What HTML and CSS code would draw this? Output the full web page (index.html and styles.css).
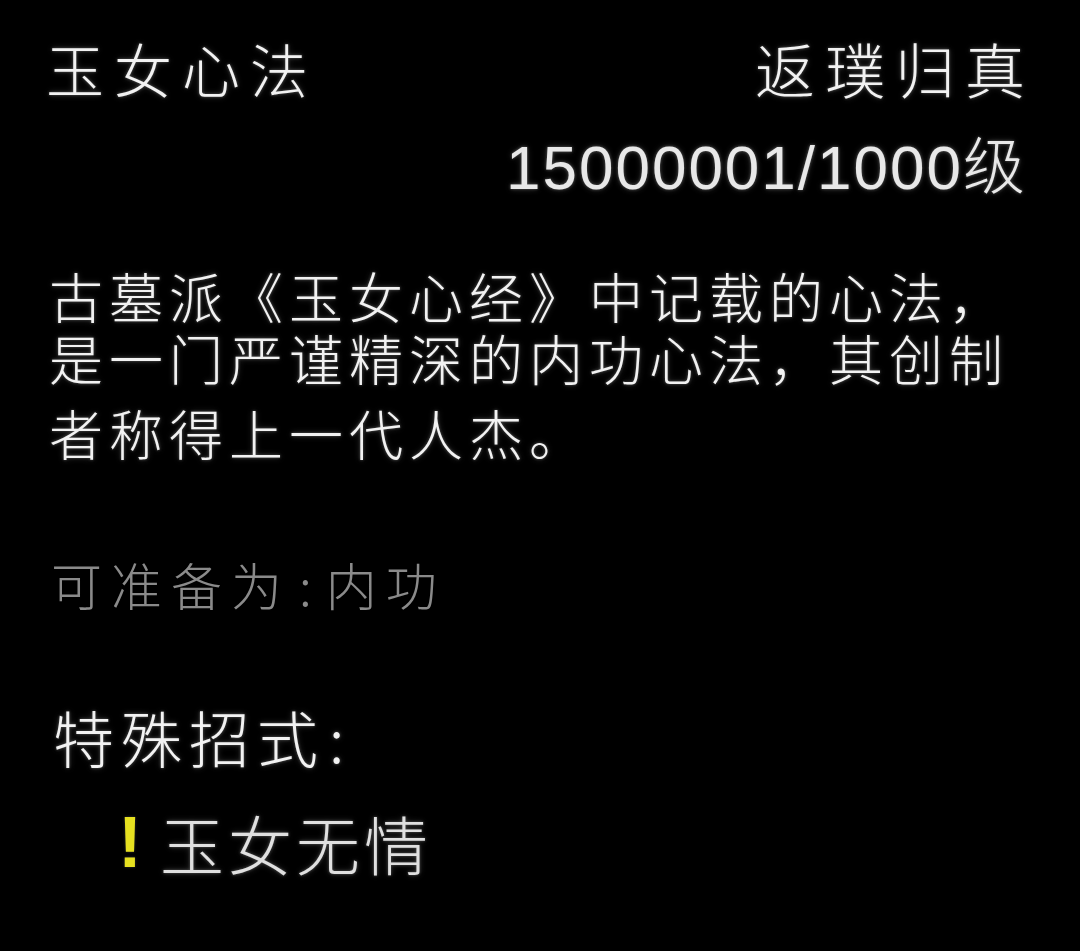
FILE: index.html
```html
<!DOCTYPE html>
<html lang="zh">
<head>
<meta charset="utf-8">
<link rel="stylesheet" href="styles.css">
</head>
<body>
<div class="panel">
  <div class="header">
    <div class="title">玉女心法</div>
    <div class="right">
      <div class="rank">返璞归真</div>
      <div class="level">15000001/1000级</div>
    </div>
  </div>
  <div class="desc">
    <div class="line">古墓派《玉女心经》中记载的心法，</div>
    <div class="line">是一门严谨精深的内功心法，其创制</div>
    <div class="line third">者称得上一代人杰。</div>
  </div>
  <div class="prep">可准备为<span class="colon">:</span>内功</div>
  <div class="special">特殊招式<span class="colon2">:</span></div>
  <div class="move"><span class="mark">!</span><span class="move-name">玉女无情</span></div>
</div>
</body>
</html>
```

FILE: styles.css
```css
html, body {
  margin: 0;
  padding: 0;
  background: #000;
}
body {
  width: 1080px;
  height: 951px;
  overflow: hidden;
  font-family: "Noto Sans CJK SC", "Noto Sans", sans-serif;
  font-weight: 300;
  color: #f2f2f2;
}
.panel {
  padding: 28px 55px 0 46px;
  text-shadow: 0 0 3px #555, 0 0 6px #333;
}
.header {
  display: flex;
  justify-content: space-between;
  align-items: flex-start;
}
.title {
  font-size: 58px;
  letter-spacing: 10px;
  line-height: 80px;
}
.right {
  display: flex;
  flex-direction: column;
  align-items: flex-end;
}
.rank {
  font-size: 60px;
  letter-spacing: 10px;
  margin-right: -10px;
  line-height: 80px;
}
.level {
  font-family: "Liberation Sans", "Noto Sans CJK SC", sans-serif;
  font-size: 62px;
  letter-spacing: 2px;
  margin-right: -2px;
  line-height: 70px;
  margin-top: 25px;
  color: #e8e8e8;
}
.desc {
  margin-top: 62px;
  padding-left: 3px;
  font-size: 54px;
  letter-spacing: 6px;
}
.line {
  line-height: 62px;
  white-space: nowrap;
}
.line.third {
  margin-top: 13px;
}
.prep {
  margin-top: 85px;
  padding-left: 5px;
  font-size: 51px;
  letter-spacing: 9px;
  color: #8a8a8a;
  line-height: 70px;
  text-shadow: none;
}
.colon {
  letter-spacing: 0;
  margin: 0 14px 0 8px;
}
.special {
  margin-top: 78px;
  padding-left: 7px;
  font-size: 61px;
  letter-spacing: 7px;
  line-height: 80px;
}
.colon2 {
  margin-left: 4px;
}
.move {
  margin-top: 25px;
  padding-left: 72px;
  display: flex;
  align-items: center;
  line-height: 80px;
}
.mark {
  font-family: "Liberation Sans", sans-serif;
  font-weight: 700;
  font-size: 72px;
  color: #e6e020;
  width: 42px;
  text-shadow: 0 0 3px #333;
}
.move-name {
  font-size: 64px;
  letter-spacing: 4px;
  color: #e0e0e0;
}
```
